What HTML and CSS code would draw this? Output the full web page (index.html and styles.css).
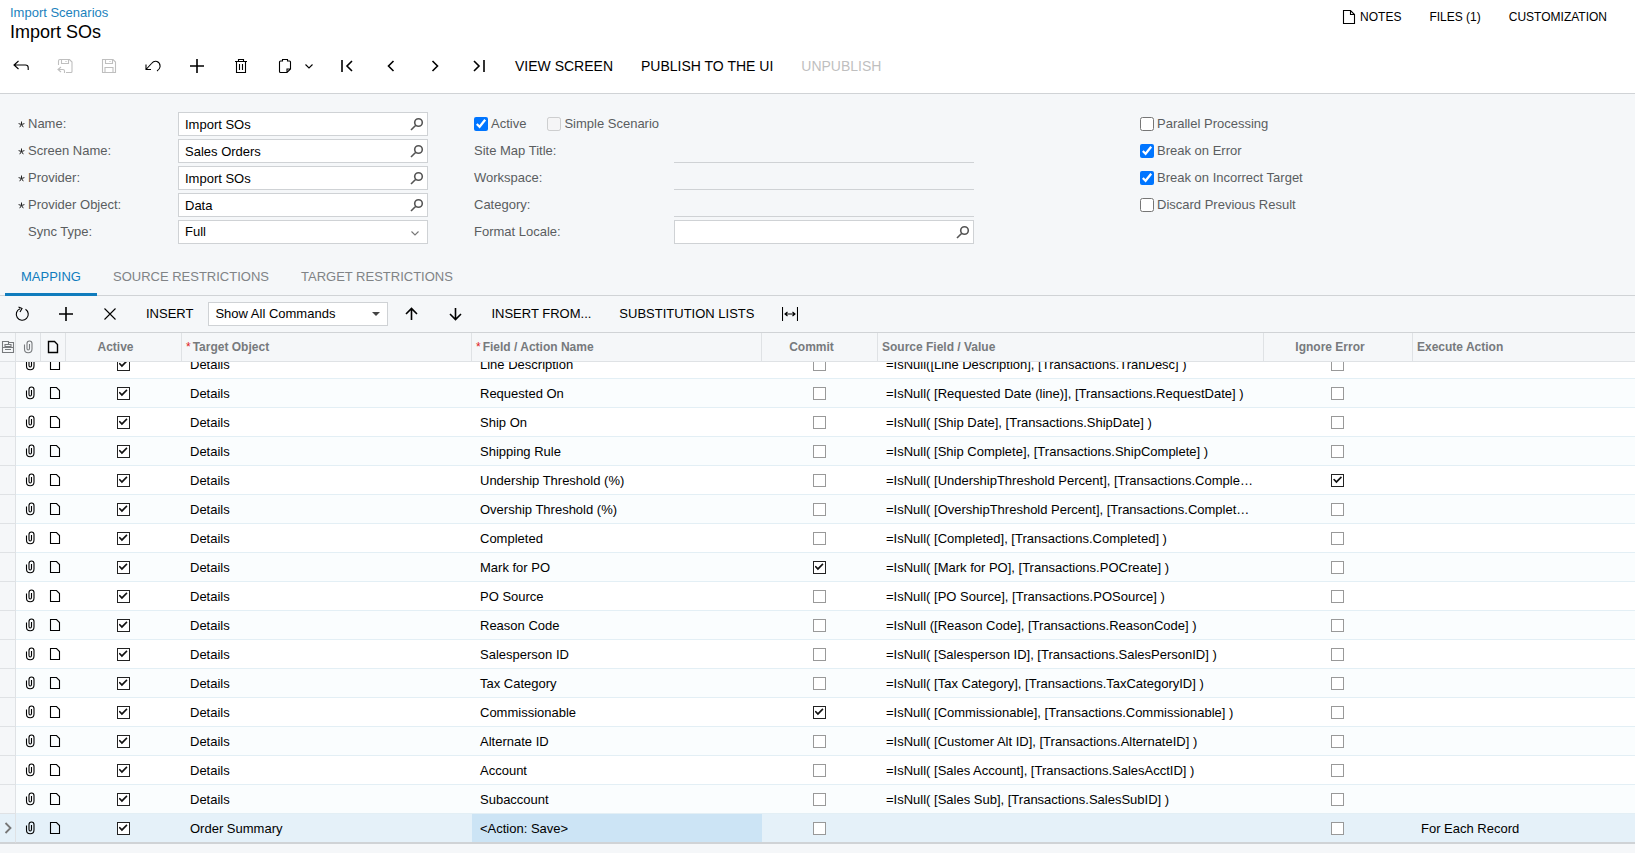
FILE: index.html
```
<!DOCTYPE html>
<html lang="en">
<head>
    <meta charset="UTF-8">
    <meta name="viewport" content="width=device-width, initial-scale=1.0">
    <title>Import Scenarios</title>
    <link rel="stylesheet" href="styles.css">
</head>
<body>
    <svg class="sprite" aria-hidden="true">
        <symbol id="i-back" viewBox="0 0 16 16"><path d="M5.500 3L1 7l4.500 4M1 7h11.500q2.700 0 2.700 2.700V12"/></symbol>
        <symbol id="i-saveclose" viewBox="0 0 16 16"><path d="M1.500 7V3q0-1.500 1.500-1.500h9.500l2.500 2.500v9.500q0 1-1 1H9M4.500 1.500v4h7v-4M9 3v1M4 9l-3 2.500 3 2.500M1 11.500h5q1.500 0 1.500 1.500v2"/></symbol>
        <symbol id="i-save" viewBox="0 0 16 16"><path d="M1.500 1.500h10.500l2.500 2.500v10.500h-13zM4.500 1.500v4h7v-4M9 3v1M4 14.500v-5h8v5"/></symbol>
        <symbol id="i-undo" viewBox="0 0 16 16"><path d="M1 6.500v5h5M1 11.500L6.500 5.500Q9 2.500 12 3.500Q15.500 5 15 9Q14.500 11.500 12 13"/></symbol>
        <symbol id="i-plus" viewBox="0 0 16 16"><path d="M8 1v14M1 8h14"/></symbol>
        <symbol id="i-trash" viewBox="0 0 16 16"><path d="M2 3.500h12M5.500 3.500v-2h5v2M3.500 3.500v11h9v-11M6.500 6v6M9.500 6v6"/></symbol>
        <symbol id="i-clip" viewBox="0 0 16 16"><path d="M5 3H3.500Q2.500 3 2.500 4v9.500q0 1 1 1H10l3.500-3.500V4q0-1-1-1H11M5.500 3.500v-2h5v2M10 14.500V11h3.500"/></symbol>
        <symbol id="i-down" viewBox="0 0 16 16"><path d="M4.500 6.500L8 10l3.500-3.500"/></symbol>
        <symbol id="i-first" viewBox="0 0 16 16"><path d="M3 2v12M13 3L8 8l5 5"/></symbol>
        <symbol id="i-prev" viewBox="0 0 16 16"><path d="M10.500 3l-5 5 5 5"/></symbol>
        <symbol id="i-next" viewBox="0 0 16 16"><path d="M5.500 3l5 5-5 5"/></symbol>
        <symbol id="i-last" viewBox="0 0 16 16"><path d="M3 3l5 5-5 5M13 2v12"/></symbol>
        <symbol id="i-search" viewBox="0 0 16 16"><circle cx="9.500" cy="6.500" r="3.800"/><path d="M6.800 9.200L2 14"/></symbol>
        <symbol id="i-refresh" viewBox="0 0 16 16"><path d="M11.500 3.200A6 6 0 1 1 6 2.700M4.500 1l3.500 1.500-2 3.500"/></symbol>
        <symbol id="i-x" viewBox="0 0 16 16"><path d="M2.500 2.500l11 11M13.500 2.500l-11 11"/></symbol>
        <symbol id="i-up-arrow" viewBox="0 0 16 16"><path d="M8.500 14V3M3 8l5.500-5.500L14 8"/></symbol>
        <symbol id="i-down-arrow" viewBox="0 0 16 16"><path d="M8.500 2v11M3 8l5.500 5.500L14 8"/></symbol>
        <symbol id="i-fit" viewBox="0 0 16 16"><path d="M.5 1v14M15.500 1v14M3 8h10M5.500 6L3 8l2.500 2M10.500 6L13 8l-2.500 2"/></symbol>
        <symbol id="i-file" viewBox="0 0 16 16"><path d="M3.500 2.500h6l3 3v8h-9z"/></symbol>
        <symbol id="i-note" viewBox="0 0 16 16"><path d="M2.500 1.500h7l4 4v9h-11zM9.500 1.500v4h4"/></symbol>
        <symbol id="i-attach" viewBox="0 0 16 16"><path d="M4.500 5.500V10q0 3.800 3.700 3.800T12 10V4.500Q12 2 9.500 2T7 4.500v5q0 1.500 1.200 1.500T9.500 9.500V5"/></symbol>
        <symbol id="i-settings" viewBox="0 0 16 16"><path d="M2.500 5V2.500h6V5M8.500 3.500h5v10h-11V5M5 5.500h6v2H5zM5 10.500h6M2.500 8.500h11"/></symbol>
        <symbol id="i-req" viewBox="0 0 7 7"><path d="M3.500 .5v3M.6 2.600l2.900.9 2.900-.9M1.700 6.200l1.800-2.700 1.800 2.700"/></symbol>
    </svg>

    <header class="header">
        <div class="header-top">
            <div>
                <a class="crumb" href="#">Import Scenarios</a>
                <h1>Import SOs</h1>
            </div>
            <nav class="links">
                <a href="#"><svg class="icon"><use href="#i-note"/></svg>NOTES</a>
                <a href="#">FILES (1)</a>
                <a href="#">CUSTOMIZATION</a>
            </nav>
        </div>
        <div class="toolbar">
            <button class="icon-btn" aria-label="Back"><svg class="icon"><use href="#i-back"/></svg></button>
            <button class="icon-btn" aria-label="Save and close" disabled><svg class="icon"><use href="#i-saveclose"/></svg></button>
            <button class="icon-btn" aria-label="Save" disabled><svg class="icon"><use href="#i-save"/></svg></button>
            <button class="icon-btn" aria-label="Undo"><svg class="icon"><use href="#i-undo"/></svg></button>
            <button class="icon-btn bold" aria-label="Add"><svg class="icon"><use href="#i-plus"/></svg></button>
            <button class="icon-btn" aria-label="Delete"><svg class="icon"><use href="#i-trash"/></svg></button>
            <button class="clip-btn" aria-label="Clipboard"><svg class="icon"><use href="#i-clip"/></svg><svg class="icon"><use href="#i-down"/></svg></button>
            <button class="icon-btn bold" aria-label="First"><svg class="icon"><use href="#i-first"/></svg></button>
            <button class="icon-btn bold" aria-label="Previous"><svg class="icon"><use href="#i-prev"/></svg></button>
            <button class="icon-btn bold" aria-label="Next"><svg class="icon"><use href="#i-next"/></svg></button>
            <button class="icon-btn bold" aria-label="Last"><svg class="icon"><use href="#i-last"/></svg></button>
            <button class="text-btn">VIEW SCREEN</button>
            <button class="text-btn">PUBLISH TO THE UI</button>
            <button class="text-btn" disabled>UNPUBLISH</button>
        </div>
    </header>

    <main>
        <form class="form">
            <div class="col col-main">
                <div class="field">
                    <label for="name"><svg class="req"><use href="#i-req"/></svg>Name:</label>
                    <div class="box"><input id="name" type="text" value="Import SOs"><button type="button" aria-label="Find name"><svg class="icon"><use href="#i-search"/></svg></button></div>
                </div>
                <div class="field">
                    <label for="screen"><svg class="req"><use href="#i-req"/></svg>Screen Name:</label>
                    <div class="box"><input id="screen" type="text" value="Sales Orders"><button type="button" aria-label="Find screen"><svg class="icon"><use href="#i-search"/></svg></button></div>
                </div>
                <div class="field">
                    <label for="provider"><svg class="req"><use href="#i-req"/></svg>Provider:</label>
                    <div class="box"><input id="provider" type="text" value="Import SOs"><button type="button" aria-label="Find provider"><svg class="icon"><use href="#i-search"/></svg></button></div>
                </div>
                <div class="field">
                    <label for="object"><svg class="req"><use href="#i-req"/></svg>Provider Object:</label>
                    <div class="box"><input id="object" type="text" value="Data"><button type="button" aria-label="Find object"><svg class="icon"><use href="#i-search"/></svg></button></div>
                </div>
                <div class="field">
                    <label for="sync" class="optional">Sync Type:</label>
                    <div class="box">
                        <select id="sync"><option>Full</option></select>
                        <svg class="icon arrow"><use href="#i-down"/></svg>
                    </div>
                </div>
            </div>

            <div class="col col-site">
                <div class="checks">
                    <label><input type="checkbox" checked>Active</label>
                    <label><input type="checkbox" disabled>Simple Scenario</label>
                </div>
                <div class="field">
                    <label for="sitemap">Site Map Title:</label>
                    <input id="sitemap" class="line" type="text" readonly>
                </div>
                <div class="field">
                    <label for="workspace">Workspace:</label>
                    <input id="workspace" class="line" type="text" readonly>
                </div>
                <div class="field">
                    <label for="category">Category:</label>
                    <input id="category" class="line" type="text" readonly>
                </div>
                <div class="field">
                    <label for="locale">Format Locale:</label>
                    <div class="box"><input id="locale" type="text"><button type="button" aria-label="Find locale"><svg class="icon"><use href="#i-search"/></svg></button></div>
                </div>
            </div>

            <div class="col">
                <div class="checks"><label><input type="checkbox">Parallel Processing</label></div>
                <div class="checks"><label><input type="checkbox" checked>Break on Error</label></div>
                <div class="checks"><label><input type="checkbox" checked>Break on Incorrect Target</label></div>
                <div class="checks"><label><input type="checkbox">Discard Previous Result</label></div>
            </div>
        </form>

        <div class="tabs" role="tablist">
            <button class="tab active" role="tab" aria-selected="true">MAPPING</button>
            <button class="tab" role="tab">SOURCE RESTRICTIONS</button>
            <button class="tab" role="tab">TARGET RESTRICTIONS</button>
        </div>

        <div class="toolbar grid-toolbar">
            <button class="icon-btn" aria-label="Refresh"><svg class="icon"><use href="#i-refresh"/></svg></button>
            <button class="icon-btn bold" aria-label="Add row"><svg class="icon"><use href="#i-plus"/></svg></button>
            <button class="icon-btn" aria-label="Delete row"><svg class="icon"><use href="#i-x"/></svg></button>
            <button class="text-btn">INSERT</button>
            <div class="box combo">
                <select aria-label="Commands"><option>Show All Commands</option></select>
                <span class="caret"></span>
            </div>
            <button class="icon-btn bold" aria-label="Move up"><svg class="icon"><use href="#i-up-arrow"/></svg></button>
            <button class="icon-btn bold" aria-label="Move down"><svg class="icon"><use href="#i-down-arrow"/></svg></button>
            <button class="text-btn">INSERT FROM...</button>
            <button class="text-btn">SUBSTITUTION LISTS</button>
            <button class="icon-btn" aria-label="Fit columns"><svg class="icon"><use href="#i-fit"/></svg></button>
        </div>

        <div class="grid" id="grid">
            <table>
                <colgroup>
                    <col class="c-mark"><col class="c-icon"><col class="c-icon"><col class="c-check">
                    <col class="c-name"><col class="c-name"><col class="c-check"><col class="c-source">
                    <col class="c-ignore"><col>
                </colgroup>
                <thead>
                    <tr>
                        <th class="mark"><svg class="icon"><use href="#i-settings"/></svg></th>
                        <th class="mark"><svg class="icon"><use href="#i-attach"/></svg></th>
                        <th class="mark dark"><svg class="icon"><use href="#i-file"/></svg></th>
                        <th class="mid">Active</th>
                        <th><span class="star">*</span>Target Object</th>
                        <th><span class="star">*</span>Field / Action Name</th>
                        <th class="mid">Commit</th>
                        <th>Source Field / Value</th>
                        <th class="mid">Ignore Error</th>
                        <th>Execute Action</th>
                    </tr>
                </thead>
                <tbody id="rows"></tbody>
            </table>
        </div>
    </main>
    <footer class="footer"></footer>

    <script>
        // object, field, commit, source, ignore error, execute action
        const rows = [
            ["Details", "Line Description", false, "=IsNull([Line Description], [Transactions.TranDesc] )", false, ""],
            ["Details", "Requested On", false, "=IsNull( [Requested Date (line)], [Transactions.RequestDate] )", false, ""],
            ["Details", "Ship On", false, "=IsNull( [Ship Date], [Transactions.ShipDate] )", false, ""],
            ["Details", "Shipping Rule", false, "=IsNull( [Ship Complete], [Transactions.ShipComplete] )", false, ""],
            ["Details", "Undership Threshold (%)", false, "=IsNull( [UndershipThreshold Percent], [Transactions.Comple…", true, ""],
            ["Details", "Overship Threshold (%)", false, "=IsNull( [OvershipThreshold Percent], [Transactions.Complet…", false, ""],
            ["Details", "Completed", false, "=IsNull( [Completed], [Transactions.Completed] )", false, ""],
            ["Details", "Mark for PO", true, "=IsNull( [Mark for PO], [Transactions.POCreate] )", false, ""],
            ["Details", "PO Source", false, "=IsNull( [PO Source], [Transactions.POSource] )", false, ""],
            ["Details", "Reason Code", false, "=IsNull ([Reason Code], [Transactions.ReasonCode] )", false, ""],
            ["Details", "Salesperson ID", false, "=IsNull( [Salesperson ID], [Transactions.SalesPersonID] )", false, ""],
            ["Details", "Tax Category", false, "=IsNull( [Tax Category], [Transactions.TaxCategoryID] )", false, ""],
            ["Details", "Commissionable", true, "=IsNull( [Commissionable], [Transactions.Commissionable] )", false, ""],
            ["Details", "Alternate ID", false, "=IsNull( [Customer Alt ID], [Transactions.AlternateID] )", false, ""],
            ["Details", "Account", false, "=IsNull( [Sales Account], [Transactions.SalesAcctID] )", false, ""],
            ["Details", "Subaccount", false, "=IsNull( [Sales Sub], [Transactions.SalesSubID] )", false, ""],
            ["Order Summary", "<Action: Save>", false, "", false, "For Each Record"]
        ];

        const icon = id => `<svg class="icon"><use href="#${id}"/></svg>`;
        const check = (on, label) => `<input type="checkbox" aria-label="${label}"${on ? " checked" : ""}>`;
        const body = document.getElementById("rows");

        rows.forEach((row, i) => {
            const last = i === rows.length - 1;
            const tr = document.createElement("tr");
            if (last) tr.className = "selected";
            tr.innerHTML = `
                <td class="mark">${last ? icon("i-next") : ""}</td>
                <td class="pic">${icon("i-attach")}</td>
                <td class="pic">${icon("i-file")}</td>
                <td class="mid">${check(true, "Active")}</td>
                <td></td>
                <td${last ? ' class="current"' : ""}></td>
                <td class="mid">${check(row[2], "Commit")}</td>
                <td></td>
                <td class="mid">${check(row[4], "Ignore error")}</td>
                <td></td>`;
            tr.cells[4].textContent = row[0];
            tr.cells[5].textContent = row[1];
            tr.cells[7].textContent = row[3];
            tr.cells[9].textContent = row[5];
            body.appendChild(tr);
        });

        // keep the selected last row in view
        const grid = document.getElementById("grid");
        grid.scrollTop = grid.scrollHeight;
    </script>
</body>
</html>
```
FILE: styles.css
```
* {
    box-sizing: border-box;
}
body {
    margin: 0;
    height: 100vh;
    display: flex;
    flex-direction: column;
    background-color: #f5f7f9;
    color: #000;
    font-family: "Liberation Sans", Arial, sans-serif;
    font-size: 13px;
    line-height: 16px;
}
button, input, select {
    font: inherit;
    color: inherit;
}
button {
    background: none;
    border: 0;
    padding: 0;
    cursor: pointer;
}
a {
    color: inherit;
    text-decoration: none;
}
.sprite {
    display: none;
}
.icon {
    display: block;
    flex: none;
    width: 16px;
    height: 16px;
    fill: none;
    stroke: currentColor;
    stroke-width: 1.1;
}
.bold .icon {
    stroke-width: 1.6;
}

/* header */
.header {
    background-color: #fff;
    border-bottom: 1px solid #d0d3d6;
    padding-bottom: 5px;
}
.header-top {
    display: flex;
    justify-content: space-between;
    align-items: flex-start;
    padding: 5px 28px 0 10px;
}
.crumb {
    display: block;
    color: #1b82bd;
}
h1 {
    margin: 0;
    font-size: 18px;
    font-weight: normal;
    line-height: 23px;
}
.links {
    display: flex;
    gap: 28px;
    padding-top: 4px;
    font-size: 12px;
}
.links a {
    display: flex;
    align-items: center;
    gap: 3px;
}
.toolbar {
    display: flex;
    align-items: center;
    gap: 2px;
    height: 44px;
    font-size: 14px;
}
.icon-btn {
    display: flex;
    justify-content: center;
    align-items: center;
    width: 42px;
    height: 32px;
}
.clip-btn {
    display: flex;
    align-items: center;
    gap: 8px;
    width: 60px;
    padding-left: 13px;
}
.text-btn {
    padding: 0 13px;
    white-space: nowrap;
}
.toolbar button:disabled {
    color: #bfbfbf;
}

/* form */
main {
    flex: 1;
    min-height: 0;
    display: flex;
    flex-direction: column;
}
.form {
    display: grid;
    grid-template-columns: 456px 666px 1fr;
    padding: 18px 18px 0;
    color: #5a5d60;
}
.col {
    display: flex;
    flex-direction: column;
    gap: 3px;
}
.col-main {
    padding-right: 46px;
}
.col-site {
    padding-right: 166px;
}
.field {
    display: grid;
    grid-template-columns: 160px 1fr;
    height: 24px;
}
.col-site .field {
    grid-template-columns: 200px 1fr;
}
.field label {
    display: flex;
    align-items: center;
    gap: 3px;
}
.field .optional {
    padding-left: 10px;
}
.req {
    width: 7px;
    height: 7px;
    fill: none;
    stroke: #222;
}
.box {
    position: relative;
    display: flex;
    align-items: center;
    height: 24px;
    background-color: #fff;
    border: 1px solid #cfd2d5;
    color: #000;
}
.box input, .box select {
    flex: 1;
    min-width: 0;
    height: 22px;
    border: 0;
    padding: 0 6px;
    background: none;
    outline: none;
}
.box select {
    appearance: none;
}
.box button {
    padding-right: 2px;
    color: #555;
}
.box button .icon {
    stroke-width: 1.6;
}
.box .arrow {
    position: absolute;
    right: 4px;
    top: 4px;
    color: #777;
    pointer-events: none;
}
.line {
    height: 24px;
    border: 0;
    border-bottom: 1px solid #cfd2d5;
    background: none;
}
.checks {
    display: flex;
    gap: 21px;
    height: 24px;
}
.checks label {
    display: flex;
    align-items: center;
    gap: 3px;
}
.checks input {
    width: 14px;
    height: 14px;
    margin: 0;
}

/* tabs */
.tabs {
    display: flex;
    margin-top: 12px;
    padding-left: 5px;
    height: 40px;
    border-bottom: 1px solid #d0d3d6;
}
.tab {
    height: 40px;
    padding: 4px 16px 0;
    border-bottom: 3px solid transparent;
    color: #808386;
}
.tab.active {
    color: #0f7cbd;
    border-bottom-color: #0f7cbd;
}
.grid-toolbar {
    flex: none;
    height: 37px;
    padding-left: 1px;
    border-bottom: 1px solid #d0d3d6;
    font-size: 13px;
}
.combo {
    width: 180px;
}
.caret {
    position: absolute;
    right: 7px;
    top: 9px;
    border: 4px solid transparent;
    border-top-color: #444;
    border-bottom: 0;
    pointer-events: none;
}

/* grid */
.grid {
    flex: 1;
    min-height: 0;
    overflow: hidden;
    border-bottom: 1px solid #d0d3d6;
}
table {
    width: 100%;
    table-layout: fixed;
    border-collapse: separate;
    border-spacing: 0;
}
.c-mark {
    width: 16px;
}
.c-icon {
    width: 25px;
}
.c-check {
    width: 116px;
}
.c-name {
    width: 290px;
}
.c-source {
    width: 386px;
}
.c-ignore {
    width: 149px;
}
th, td {
    height: 29px;
    padding: 2px 8px 0;
    text-align: left;
    white-space: nowrap;
    overflow: hidden;
    text-overflow: ellipsis;
}
th {
    position: sticky;
    top: 0;
    z-index: 1;
    padding: 0 4px;
    background-color: #f5f7f9;
    border-right: 1px solid #dfe2e5;
    border-bottom: 1px solid #dfe2e5;
    color: #777a7d;
    font-size: 12px;
}
th:last-child {
    border-right: 0;
}
.star {
    margin-right: 2px;
    color: #e02020;
    font-weight: normal;
}
td {
    border-bottom: 1px solid #e3eff5;
    background-color: #fff;
}
tr:nth-child(even) td {
    background-color: #fafdfe;
}
.mid {
    padding: 0 2px 0 0;
    text-align: center;
}
th.mid {
    padding-right: 16px;
}
.mark, .pic {
    padding: 0;
    text-overflow: clip;
}
.mark .icon {
    margin: 0 auto;
}
.pic .icon {
    margin: 0 auto 0 6px;
}
.dark {
    color: #000;
}
.dark .icon {
    stroke-width: 1.4;
}
tr td.mark, tr:nth-child(even) td.mark {
    background-color: #f5f7f9;
    border-right: 1px solid #dfe2e5;
    border-bottom-color: #dfe2e5;
    color: #777;
}
td.mark .icon {
    stroke-width: 1.8;
}
tr.selected td {
    background-color: #e5f1f9;
    border-bottom-color: #d0d3d6;
}
tr.selected td.current {
    background-color: #cce4f5;
}
.pic .icon path {
    fill: #fff;
}
td input {
    appearance: none;
    display: block;
    width: 13px;
    height: 13px;
    margin: 0 auto;
    border: 1px solid #999;
    background-color: #fff;
}
td input:checked {
    border-color: #222;
}
td input:checked::after {
    content: "";
    display: block;
    width: 9px;
    height: 9px;
    margin: 1px;
    background-color: #111;
    clip-path: polygon(0 45%, 15% 35%, 38% 58%, 88% 8%, 100% 22%, 38% 86%);
}
.footer {
    flex: none;
    height: 9px;
}
```
